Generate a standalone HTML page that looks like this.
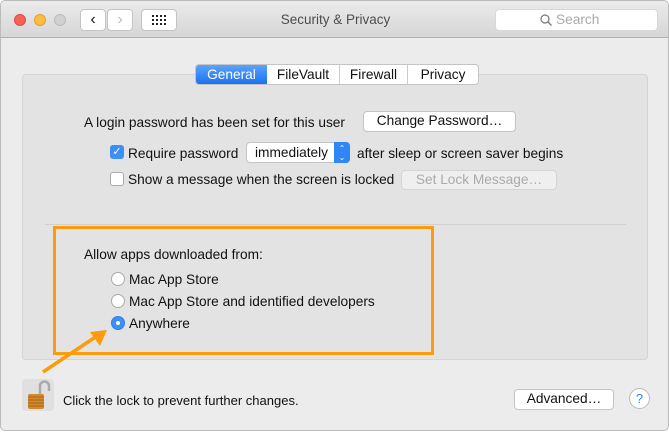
<!DOCTYPE html>
<html><head><style>
*{margin:0;padding:0;box-sizing:border-box}
body{width:669px;height:431px;background:#fff;font-family:"Liberation Sans",sans-serif;font-size:13.7px;color:#111;position:relative;overflow:hidden}
.win{position:absolute;left:0;top:0;width:669px;height:431px;background:#ececec;border-radius:5px;border:1px solid #bbb}
.title{position:absolute;left:0;top:0;width:667px;height:37px;background:linear-gradient(#ebebeb,#d6d6d6);border-bottom:1px solid #b0b0b0;border-radius:5px 5px 0 0}
.a{position:absolute}
.dot{position:absolute;top:13px;width:12px;height:12px;border-radius:50%}
.btn{position:absolute;background:#fff;border:1px solid #c4c4c4;border-radius:4px;text-align:center;line-height:18px;font-size:13.7px}
.panel{position:absolute;left:21px;top:73px;width:626px;height:286px;background:#e3e3e3;border:1px solid #d4d4d4;border-radius:4px}
.radio{position:absolute;width:14px;height:14px;border-radius:50%;background:#fff;border:1px solid #aaa}
</style></head><body>
<div class="win">
<div class="title">
<div class="dot" style="left:13px;background:#fc605b;border:1px solid #de4a45"></div>
<div class="dot" style="left:33px;background:#fdbc40;border:1px solid #dea034"></div>
<div class="dot" style="left:53px;background:#d0d0d0;border:1px solid #bbb"></div>
<div class="btn" style="left:79px;top:8px;width:26px;height:22px;font-size:16px;line-height:20px">&#8249;</div>
<div class="btn" style="left:106px;top:8px;width:26px;height:22px;font-size:16px;line-height:20px;color:#bbb">&#8250;</div>
<div class="btn" style="left:140px;top:8px;width:36px;height:22px">
<svg width="14" height="12" style="margin-top:5px" viewBox="0 0 14 12"><g fill="#222"><rect x="0" y="0" width="2" height="2"/><rect x="4" y="0" width="2" height="2"/><rect x="8" y="0" width="2" height="2"/><rect x="12" y="0" width="2" height="2"/><rect x="0" y="4" width="2" height="2"/><rect x="4" y="4" width="2" height="2"/><rect x="8" y="4" width="2" height="2"/><rect x="12" y="4" width="2" height="2"/><rect x="0" y="8" width="2" height="2"/><rect x="4" y="8" width="2" height="2"/><rect x="8" y="8" width="2" height="2"/><rect x="12" y="8" width="2" height="2"/></g></svg></div>
<div class="a" style="left:0;width:669px;top:11px;text-align:center;color:#4d4d4d;font-size:13.5px">Security &amp; Privacy</div>
<div class="a" style="left:494px;top:8px;width:163px;height:22px;background:#fff;border-radius:4px;border:1px solid #d8d8d8;color:#aaa;line-height:20px;padding-left:60px">Search
<svg class="a" style="left:44px;top:4px" width="12" height="12" viewBox="0 0 12 12"><circle cx="5" cy="5" r="4" fill="none" stroke="#777" stroke-width="1.2"/><path d="M8 8l3.5 3.5" stroke="#777" stroke-width="1.3"/></svg></div>
</div>
<div class="panel"></div>
<div class="a" style="left:194px;top:63px;height:21px;width:284px;border:1px solid #c4c4c4;border-radius:4px;background:#fff;display:flex;font-size:13.7px;line-height:19px;overflow:hidden">
<div style="width:71px;text-align:center;background:linear-gradient(#5ba3fa,#1a72f0);color:#fff">General</div>
<div style="width:73px;text-align:center;border-right:1px solid #ccc">FileVault</div>
<div style="width:68px;text-align:center;border-right:1px solid #ccc">Firewall</div>
<div style="flex:1;text-align:center">Privacy</div>
</div>
<div class="a" style="left:83px;top:114px">A login password has been set for this user</div>
<div class="btn" style="left:362px;top:110px;width:153px;height:21px">Change Password…</div>
<div class="a" style="left:109px;top:144px;width:14px;height:14px;border-radius:3px;background:#3b8ff6;color:#fff;font-size:11px;line-height:14px;text-align:center">&#10003;</div>
<div class="a" style="left:127px;top:145px">Require password</div>
<div class="a" style="left:245px;top:141px;width:104px;height:21px;background:#fff;border:1px solid #c4c4c4;border-radius:4px;line-height:19px;padding-left:8px">immediately
<div class="a" style="right:-1px;top:-1px;width:16px;height:21px;background:#2f86f5;border-radius:0 4px 4px 0;color:#fff;font-size:8px;line-height:9px;text-align:center;padding-top:2px">&#8963;<br>&#8964;</div></div>
<div class="a" style="left:356px;top:145px">after sleep or screen saver begins</div>
<div class="a" style="left:109px;top:171px;width:14px;height:14px;border-radius:3px;background:#fff;border:1px solid #aaa"></div>
<div class="a" style="left:127px;top:171px">Show a message when the screen is locked</div>
<div class="btn" style="left:400px;top:169px;width:156px;height:20px;color:#aaa;background:#efefef;border-color:#d4d4d4">Set Lock Message…</div>
<div class="a" style="left:44px;top:223px;width:581px;height:1px;background:#d0d0d0"></div>
<div class="a" style="left:52px;top:225px;width:381px;height:129px;border:3px solid #fd9a0e"></div>
<div class="a" style="left:83px;top:246px">Allow apps downloaded from:</div>
<div class="radio" style="left:110px;top:271px"></div>
<div class="a" style="left:128px;top:271px">Mac App Store</div>
<div class="radio" style="left:110px;top:293px"></div>
<div class="a" style="left:128px;top:293px">Mac App Store and identified developers</div>
<div class="radio" style="left:110px;top:315px;background:#3b8ff6;border-color:#2f7fe6"><div style="position:absolute;left:4px;top:4px;width:4px;height:4px;border-radius:50%;background:#fff"></div></div>
<div class="a" style="left:128px;top:315px">Anywhere</div>
<svg class="a" style="left:0;top:0" width="669" height="431"><path d="M42 371L96 335" stroke="#fd9a0e" stroke-width="3.5"/><path d="M106 329L89 331L99 345Z" fill="#fd9a0e"/></svg>
<div class="a" style="left:21px;top:378px;width:32px;height:32px;background:#e0e0e0;border-radius:4px"></div>
<svg class="a" style="left:24px;top:378px" width="26" height="32" viewBox="0 0 26 32"><path d="M15 16V7a4.5 4.5 0 0 1 9 0v5" fill="none" stroke="#aaa" stroke-width="2.5"/><rect x="3" y="15" width="16" height="15" rx="2" fill="#d28a2c"/><path d="M3 18h16M3 21h16M3 24h16M3 27h16" stroke="#a8611a" stroke-width="1"/></svg>
<div class="a" style="left:62px;top:392px;font-size:13px">Click the lock to prevent further changes.</div>
<div class="btn" style="left:513px;top:388px;width:100px;height:21px">Advanced…</div>
<div class="a" style="left:628px;top:387px;width:21px;height:21px;border-radius:50%;background:#fff;border:1px solid #bbb;color:#2f86f5;text-align:center;line-height:19px;font-size:13px">?</div>
</div>
</body></html>
